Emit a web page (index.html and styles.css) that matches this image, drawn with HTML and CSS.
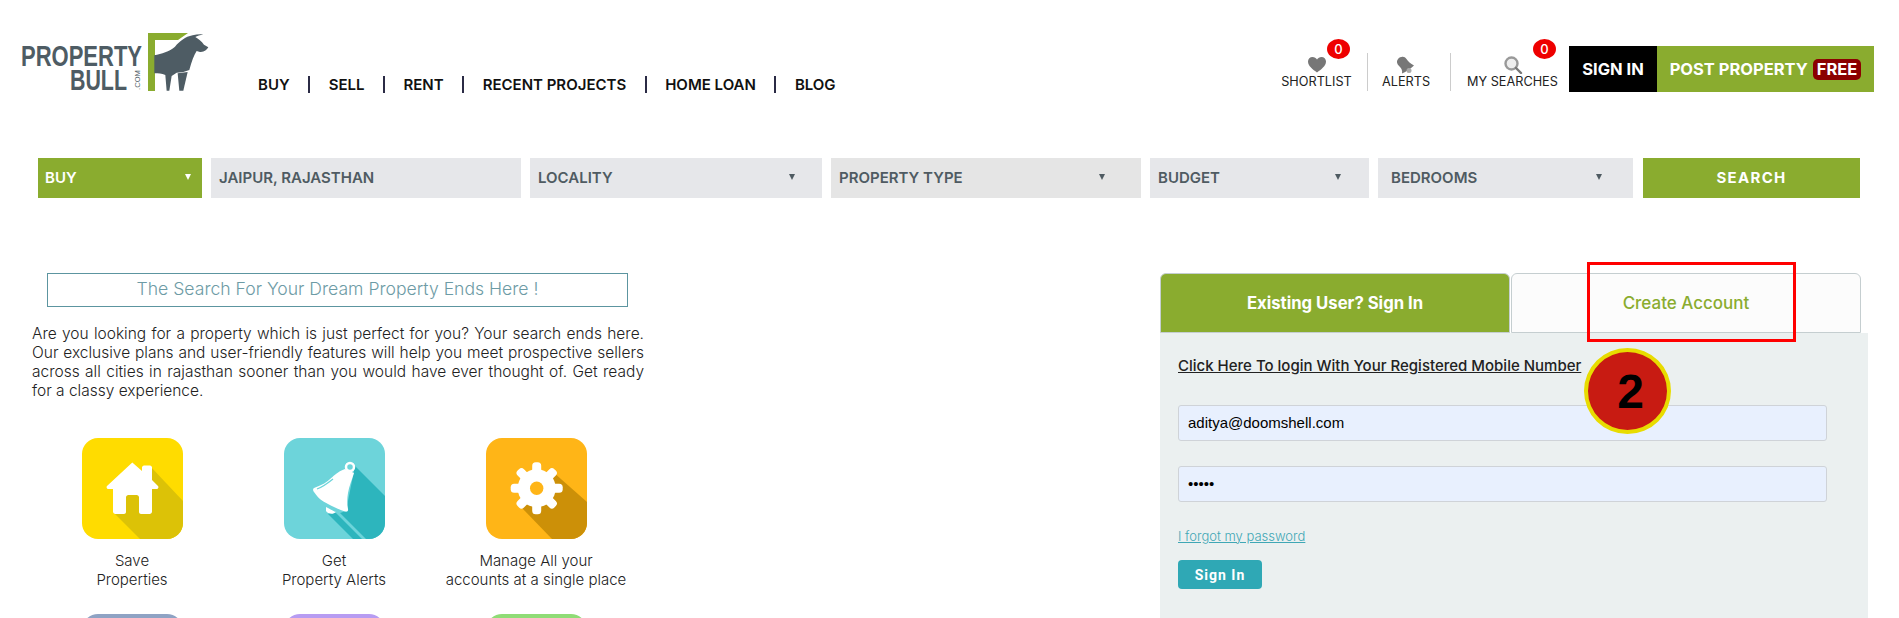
FILE: index.html
```html
<!DOCTYPE html>
<html lang="en">
<head>
  <meta charset="UTF-8">
  <meta name="viewport" content="width=device-width, initial-scale=1.0">
  <title>Property Bull - Sign In</title>
  <link rel="stylesheet" href="styles.css">
</head>
<body>

<header class="topbar">
  <a class="logo" href="#">
    <svg width="190" height="66" viewBox="20 33 190 66">
      <path d="M148 33H188L178 40H155V91H148Z" fill="#8aac2f"/>
      <g transform="translate(10 20) scale(.3333)" fill="#4e5c64">
        <path d="M433 106C455 100 478 96 495 80C510 64 525 50 548 46C558 43 570 42 580 43C570 46 562 48 556 51C565 56 575 64 582 74L595 82C590 90 583 97 570 96L560 93C552 105 545 125 538 150L520 156L500 158L485 168L478 212H470L466 165C455 160 445 160 433 160Z"/>
        <path d="M503 160L533 156L520 212H508Z"/>
      </g>
      <text class="logo-word" x="21" y="66" textLength="121" lengthAdjust="spacingAndGlyphs">PROPERTY</text>
      <text class="logo-word" x="70" y="90" textLength="57" lengthAdjust="spacingAndGlyphs">BULL</text>
      <text class="logo-com" transform="translate(140 90) rotate(-90)" textLength="20" lengthAdjust="spacingAndGlyphs">.COM</text>
    </svg>
  </a>

  <nav class="mainnav">
    <a href="#">BUY</a>
    <a href="#">SELL</a>
    <a href="#">RENT</a>
    <a href="#">RECENT PROJECTS</a>
    <a href="#">HOME LOAN</a>
    <a href="#">BLOG</a>
  </nav>

  <div class="userbar">
    <div class="tools">
      <a class="tool tool-shortlist" href="#">
        <svg class="tool-icon" width="20" height="18" viewBox="0 0 20 18"><path d="M10 16.500C6 13.500 1 10 1 5.500C1 3 3 1 5.500 1C7.500 1 9 2 10 3.500C11 2 12.500 1 14.500 1C17 1 19 3 19 5.500C19 10 14 13.500 10 16.500Z" fill="#777"/></svg>
        <span>SHORTLIST</span>
        <b class="badge">0</b>
      </a>
      <a class="tool tool-alerts" href="#">
        <svg class="tool-icon" width="20" height="18" viewBox="0 0 20 18"><path d="M1 5C2 2.500 3.500 1 5.500 1C7.500 0.500 9 1 10.500 3C12 5.500 14.500 7.500 18 9.500C15 12.500 10 16 6 17.500C6.500 14.500 5.500 12.500 4 11C2.500 9.500 0.500 7.500 1 5Z" fill="#777"/><circle cx="13" cy="14.500" r="2.500" fill="#aaa"/></svg>
        <span>ALERTS</span>
      </a>
      <a class="tool tool-searches" href="#">
        <svg class="tool-icon" width="20" height="18" viewBox="0 0 20 18"><circle cx="8.500" cy="7.500" r="6" fill="#eee" stroke="#999" stroke-width="2.400"/><path d="M13 12L18 17" stroke="#777" stroke-width="2.400" stroke-linecap="round"/></svg>
        <span>MY SEARCHES</span>
        <b class="badge">0</b>
      </a>
    </div>
    <a class="btn-signin" href="#">SIGN IN</a>
    <a class="btn-post" href="#">POST PROPERTY <span class="free">FREE</span></a>
  </div>
</header>

<form class="searchbar">
  <div class="field field-buy">BUY<i class="caret"></i></div>
  <div class="field">JAIPUR, RAJASTHAN</div>
  <div class="field field-locality">LOCALITY<i class="caret"></i></div>
  <div class="field field-type">PROPERTY TYPE<i class="caret"></i></div>
  <div class="field field-budget">BUDGET<i class="caret"></i></div>
  <div class="field field-rooms">BEDROOMS<i class="caret"></i></div>
  <button class="search-btn" type="button">SEARCH</button>
</form>

<main class="content">
  <section class="intro">
    <h2 class="intro-title">The Search For Your Dream Property Ends Here !</h2>
    <p class="intro-text">Are you looking for a property which is just perfect for you? Your search ends here. Our exclusive plans and user-friendly features will help you meet prospective sellers across all cities in rajasthan sooner than you would have ever thought of. Get ready for a classy experience.</p>

    <div class="perks">
      <div class="perk">
        <svg class="tile" viewBox="0 0 101 101">
          <rect width="101" height="101" fill="#ffdc00"/>
          <path d="M68 28L101 63V101H58L31 74Z" fill="#dcc207"/>
          <path d="M50.300 24.500L60 33V29.500C60 28.500 61 27.500 62 27.500H68C69 27.500 70 28.500 70 29.500V42L76 48C77 49.500 76 51 74.500 51H70V73.500C70 75 69 76 67.500 76H59C58 76 57 75 57 74V59.500C57 58 56 57 54.500 57H46.500C45 57 44 58 44 59.500V74C44 75 43 76 42 76H33.500C32 76 31 75 31 73.500V51H26.500C25 51 24 49.500 25 48Z" fill="#fff"/>
        </svg>
        <p>Save<br>Properties</p>
      </div>
      <div class="perk">
        <svg class="tile" viewBox="0 0 101 101">
          <rect width="101" height="101" fill="#6dd4da"/>
          <path d="M71 28L101 58V101H82L56 75L62 73Z" fill="#2db5bd"/>
          <path d="M44 76L50 73L78 101H69Z" fill="#2db5bd"/>
          <path d="M61 31C58 32 54 34 50 37.500C46 41 42 45 36 47.500L30 50C28.500 51 29 53 30 54C34 60 38 63 44 66C50 69 56 72 61 73.500C63 74 64.500 73 64 71C63 66 63 60 64 55C65 48 68 42 70 35Z" fill="#fff"/>
          <path d="M33 51C39 49 44 45 49 41" stroke="#6dd4da" stroke-width="1.300" fill="none"/>
          <path d="M42 69C46 71 49 73 52 74C49 77 44 76 42 73Z" fill="#fff"/>
          <circle cx="66" cy="29" r="4" fill="none" stroke="#fff" stroke-width="2.500"/>
        </svg>
        <p>Get<br>Property Alerts</p>
      </div>
      <div class="perk">
        <svg class="tile" viewBox="0 0 101 101">
          <rect width="101" height="101" fill="#ffb517"/>
          <path d="M67 34L101 64V101H66L35 69Z" fill="#cc9008"/>
          <g fill="#fff">
            <circle cx="50.700" cy="50.300" r="19"/>
            <rect x="46.200" y="24.300" width="9" height="52" rx="3.500"/>
            <rect x="46.200" y="24.300" width="9" height="52" rx="3.500" transform="rotate(45 50.700 50.300)"/>
            <rect x="46.200" y="24.300" width="9" height="52" rx="3.500" transform="rotate(90 50.700 50.300)"/>
            <rect x="46.200" y="24.300" width="9" height="52" rx="3.500" transform="rotate(135 50.700 50.300)"/>
          </g>
          <circle cx="50.700" cy="50.300" r="6.700" fill="#ffb517"/>
        </svg>
        <p>Manage All your<br>accounts at a single place</p>
      </div>
      <div class="tile tile-slate"></div>
      <div class="tile tile-violet"></div>
      <div class="tile tile-lime"></div>
    </div>
  </section>

  <section class="account">
    <div class="tabs">
      <a class="tab tab-active" href="#">Existing User? Sign In</a>
      <a class="tab" href="#">Create Account</a>
    </div>
    <form class="login">
      <a class="mobile-link" href="#">Click Here To login With Your Registered Mobile Number</a>
      <input class="login-input" type="text" value="aditya@doomshell.com">
      <input class="login-input" type="password" value="12345">
      <a class="forgot" href="#">I forgot my password</a>
      <button class="login-btn" type="button">Sign In</button>
    </form>
  </section>
</main>

<div class="mark-box"></div>
<div class="mark-step">2</div>

</body>
</html>
```

FILE: styles.css
```css
* { box-sizing: border-box; }

html, body {
  height: 100%;
  overflow: hidden;
}

body {
  margin: 0;
  background: #fff;
  color: #222;
  font-family: Inter, 'Open Sans', sans-serif;
  font-size: 14px;
}

a {
  color: inherit;
  text-decoration: none;
}

/* top bar */
.topbar {
  display: flex;
  align-items: flex-end;
  height: 95px;
  padding: 0 25px 0 20px;
}

.logo {
  display: block;
  height: 62px;
}

.logo svg { display: block; }

.logo-word {
  font-family: 'Liberation Sans', sans-serif;
  font-weight: 700;
  font-size: 29px;
  fill: #4e5c64;
}

.logo-com {
  font-family: 'Liberation Sans', sans-serif;
  font-size: 7px;
  fill: #4e5c64;
}

.mainnav {
  display: flex;
  align-items: center;
  height: 17px;
  margin: 0 0 2px 29.500px;
}

.mainnav a {
  padding: 0 18.500px;
  border-right: 2px solid #2b2b45;
  color: #111;
  font-size: 15px;
  font-weight: 600;
  line-height: 17px;
  white-space: nowrap;
}

.mainnav a:last-child { border-right: 0; }

.userbar {
  display: flex;
  align-items: flex-start;
  margin: 0 0 3px auto;
}

.tools {
  display: flex;
  margin-top: 7px;
}

.tool {
  position: relative;
  display: flex;
  flex-direction: column;
  align-items: center;
  height: 38px;
  padding-top: 3px;
  font-size: 12.700px;
  line-height: 16px;
  white-space: nowrap;
}

.tool-shortlist {
  width: 86px;
  padding-right: 16px;
  border-right: 1px solid #ccc;
}

.tool-alerts {
  width: 83px;
  padding-right: 6px;
  border-right: 1px solid #ccc;
}

.tool-searches {
  width: 118px;
  padding-left: 5px;
}

.badge {
  position: absolute;
  top: -14px;
  left: 45px;
  width: 23px;
  height: 20px;
  border-radius: 50%;
  background: #ee0000;
  color: #fff;
  font-size: 13px;
  font-weight: 500;
  line-height: 20px;
  text-align: center;
}

.tool-searches .badge { left: 82px; }

.btn-signin, .btn-post {
  display: flex;
  align-items: center;
  height: 46px;
  color: #fff;
  font-size: 16.500px;
  font-weight: 700;
  white-space: nowrap;
}

.btn-signin {
  justify-content: center;
  width: 88px;
  background: #000;
}

.btn-post {
  justify-content: center;
  gap: 5px;
  width: 217px;
  background: #8aac2f;
}

.free {
  padding: 0 4px;
  border-radius: 5px;
  background: #8b0000;
  line-height: 21px;
}

/* search bar */
.searchbar {
  display: grid;
  grid-template-columns: 164px 310px 292px 310px 219px 255px 218px;
  column-gap: 9px;
  height: 40px;
  margin: 63px 0 0 38px;
}

.field {
  display: flex;
  align-items: center;
  justify-content: space-between;
  padding: 0 30px 2px 8px;
  background: #e6e7ea;
  color: #4f5b62;
  font-size: 15px;
  font-weight: 600;
}

.field-buy {
  padding-left: 7px;
  padding-right: 11px;
  background: #8aac2f;
  color: #fff;
}

.field-locality { padding-right: 27px; }

.field-type {
  padding-right: 36px;
  background: #e5e5e5;
}

.field-budget { padding-right: 28px; }

.field-rooms {
  padding: 0 31px 2px 13px;
}

.caret {
  width: 0;
  height: 0;
  border-left: 3px solid transparent;
  border-right: 3px solid transparent;
  border-top: 6px solid #4f5b62;
}

.field-buy .caret { border-top-color: #fff; }

.search-btn {
  margin-left: 1px;
  padding-bottom: 2px;
  border: 0;
  background: #8aac2f;
  color: #fff;
  font-family: inherit;
  font-size: 15px;
  font-weight: 700;
  letter-spacing: 1.300px;
}

/* content */
.content {
  display: flex;
  justify-content: space-between;
  height: 345px;
  margin-top: 75px;
  padding: 0 31.500px 0 32px;
  overflow: hidden;
}

.intro { width: 612px; }

.intro-title {
  width: 581px;
  height: 34px;
  margin: 0 0 17px 15px;
  border: 1px solid #5c95a0;
  color: #6d9ba5;
  font-size: 17.600px;
  font-weight: 300;
  line-height: 30px;
  text-align: center;
}

.intro-text {
  margin: 0;
  color: #222;
  font-size: 15.500px;
  font-weight: 300;
  line-height: 19px;
  text-align: justify;
}

.perks {
  display: grid;
  grid-template-columns: repeat(3, 202px);
  justify-items: center;
  row-gap: 25px;
  margin: 38px 0 0 -1px;
}

.perk {
  display: flex;
  flex-direction: column;
  align-items: center;
}

.perk p {
  margin: 12px 0 0;
  font-size: 15px;
  font-weight: 300;
  line-height: 19px;
  text-align: center;
  white-space: nowrap;
}

.tile {
  display: block;
  width: 101px;
  height: 101px;
  border-radius: 16px;
}

.tile-slate { background: #8fa3c4; }
.tile-violet { background: #b79cf2; }
.tile-lime { background: #8fdc76; }

/* sign in panel */
.account {
  width: 707.500px;
  height: 345px;
}

.tabs {
  display: flex;
  gap: 1px;
  width: 701px;
  height: 60px;
}

.tab {
  display: flex;
  align-items: center;
  justify-content: center;
  flex: 1;
  border: 1px solid #c5ced0;
  border-radius: 6px 6px 0 0;
  background: #fcfcfc;
  color: #8aac2f;
  font-size: 17px;
  font-weight: 500;
}

.tab-active {
  background: #8aac2f;
  color: #fff;
  font-size: 16.700px;
  font-weight: 700;
}

.login {
  display: flex;
  flex-direction: column;
  align-items: flex-start;
  height: 285px;
  padding: 24px 0 0 18px;
  background: #ebf0f0;
}

.mobile-link {
  color: #222;
  font-size: 15px;
  font-weight: 500;
  line-height: 18px;
  text-decoration: underline;
}

.login-input {
  width: 649px;
  height: 36px;
  margin-top: 25px;
  padding: 0 9px 1px;
  border: 1px solid #cfd3d8;
  border-radius: 3px;
  background: #e8f0fe;
  color: #000;
  font-family: 'Liberation Sans', sans-serif;
  font-size: 15px;
}

.login-input:first-of-type { margin-top: 30px; }

.forgot {
  margin-top: 26px;
  color: #3fa7b5;
  font-size: 13px;
  font-weight: 300;
  line-height: 16px;
  text-decoration: underline;
}

.login-btn {
  width: 84px;
  height: 29px;
  margin-top: 16px;
  border: 0;
  border-radius: 4px;
  background: #2fa8b5;
  color: #fff;
  font-family: Roboto, sans-serif;
  font-size: 14px;
  font-weight: 700;
  letter-spacing: 1px;
}

/* annotations drawn over the page */
.mark-box {
  position: absolute;
  top: 262px;
  left: 1587px;
  width: 209px;
  height: 80px;
  border: 3px solid #f00;
}

.mark-step {
  position: absolute;
  top: 348px;
  left: 1584px;
  width: 87px;
  height: 86px;
  padding-left: 6px;
  border: 4px solid #e8dc00;
  border-radius: 50%;
  background: #c81b12;
  color: #000;
  font-family: 'Liberation Sans', sans-serif;
  font-size: 48px;
  font-weight: 700;
  line-height: 80px;
  text-align: center;
}
```
